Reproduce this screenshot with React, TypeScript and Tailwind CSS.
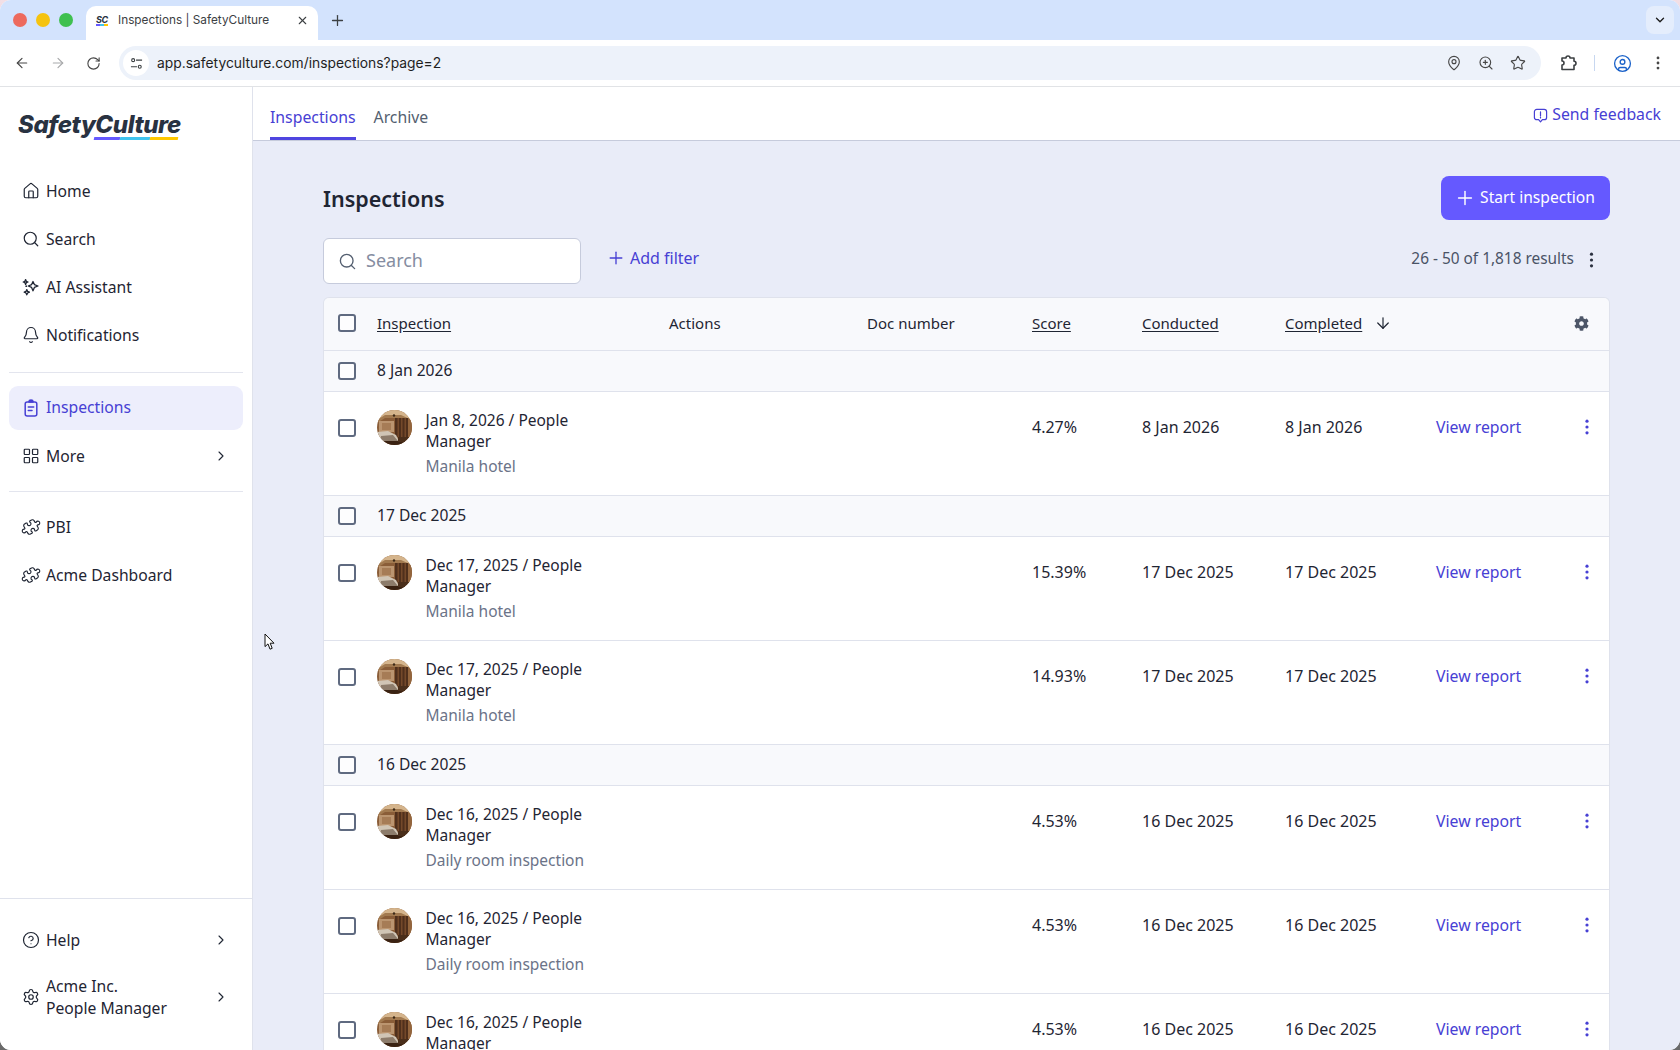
import React from "react";
import {
  ArrowLeft, ArrowRight, RotateCw, MapPin, ZoomIn, Star, CircleUser, X, Plus, ChevronDown, Puzzle,
  House, Search, Bell, LayoutGrid, ChevronRight, CircleHelp, Settings, ArrowDown,
} from "lucide-react";
import { FaCog } from "react-icons/fa";

const Avatar = () => (
  <svg viewBox="0 0 35 35" className="w-[35px] h-[35px] rounded-full shrink-0">
    <rect width="35" height="35" fill="#8a5d38" />
    <rect x="0" y="0" width="35" height="8" fill="#d4b48c" />
    <path d="M0 10 L8 5 H24 L35 10 V14 L24 8 H8 L0 13Z" fill="#a27a50" />
    <rect x="2" y="11" width="15" height="11" fill="#bb9570" />
    <rect x="5" y="13" width="9" height="7" fill="#a67c56" />
    <rect x="18" y="8" width="13" height="19" fill="#50301c" />
    <rect x="20.5" y="8" width="1.5" height="19" fill="#74492a" />
    <rect x="24" y="8" width="1.5" height="19" fill="#74492a" />
    <rect x="27.5" y="8" width="1.5" height="19" fill="#74492a" />
    <rect x="31" y="9" width="4" height="19" fill="#93653d" />
    <path d="M0 22 L11 21 L19 25 L22 31 L0 32Z" fill="#d0c5b5" />
    <path d="M4 26 L16 25 L21 31 L3 32Z" fill="#8d7c6b" />
    <rect x="0" y="31" width="35" height="4" fill="#3a2212" />
    <rect x="21" y="27" width="14" height="5" fill="#4a2e1a" />
    <circle cx="17" cy="5.5" r="1.2" fill="#3d2a18" />
  </svg>
);

const Kebab = ({ className }: { className: string }) => (
  <svg viewBox="0 0 4 16" className={className} fill="currentColor">
    <circle cx="2" cy="2.2" r="1.6" />
    <circle cx="2" cy="8" r="1.6" />
    <circle cx="2" cy="13.8" r="1.6" />
  </svg>
);

const Check = () => <span className="block w-[18px] h-[18px] rounded-[3px] border-2 border-[#5f6a80] bg-white/70" />;

const SparkIcon = () => (
  <svg viewBox="0 0 18 18" className="w-[18px] h-[18px]" fill="none" stroke="#1f2533" strokeWidth="1.3" strokeLinejoin="round">
    <path d="M11 3.5 L12.4 6.6 L16 8 L12.4 9.4 L11 12.8 L9.6 9.4 L6.2 8 L9.6 6.6Z" />
    <path d="M3.6 1.6 L4.3 3.3 L6 4 L4.3 4.7 L3.6 6.4 L2.9 4.7 L1.2 4 L2.9 3.3Z" />
    <path d="M4.8 11.6 L5.6 13.4 L7.4 14.2 L5.6 15 L4.8 16.8 L4 15 L2.2 14.2 L4 13.4Z" />
    <path d="M4.2 8.2 L4.2 8.2" strokeLinecap="round" strokeWidth="1.8" />
  </svg>
);

const ClipIcon = () => (
  <svg viewBox="0 0 18 18" className="w-[18px] h-[18px]" fill="none" stroke="#4740d4" strokeWidth="1.5" strokeLinecap="round" strokeLinejoin="round">
    <rect x="3.2" y="3" width="11.6" height="14" rx="2" />
    <path d="M7 3 V2.2 C7 1.5 7.8 1 9 1 C10.2 1 11 1.5 11 2.2 V3 Z" fill="#4740d4" />
    <path d="M6.3 8 H11.7 M6.3 11.5 H10" />
  </svg>
);

const ExtensionIcon = () => (
  <svg viewBox="0 0 18 18" className="w-[18px] h-[18px] ml-[18px]" fill="none" stroke="#3c4043" strokeWidth="1.6" strokeLinejoin="round">
    <path d="M3 4 H7 A2 2 0 0 1 11 4 H15 V7.2 A2 2 0 0 1 15 11.2 V15.5 H3 V11 A2 2 0 0 0 3 7 Z" />
  </svg>
);

const NavItem = ({ icon, label, chevron }: { icon: React.ReactNode; label: React.ReactNode; chevron?: boolean }) => (
  <div className="flex items-center h-[44px] pl-[13px] pr-[23px] text-[15.7px] text-[#1f2533] leading-[22px]">
    <span className="w-[18px] mr-[6px] flex items-center justify-center shrink-0">{icon}</span>
    <span className="flex-1">{label}</span>
    {chevron && <ChevronRight size={16} strokeWidth={1.6} className="text-[#1f2533]" />}
  </div>
);

const Gap = () => <div className="h-[4px]" />;
const Sep = ({ mt, mb }: { mt: string; mb: string }) => <div className={`mx-[9px] h-px bg-[#e3e5ee] ${mt} ${mb}`} />;

const cols = "grid grid-cols-[53px_292px_198px_165px_110px_143px_150px_1fr]";

type Row = { t: string; sub: string; score: string; d: string };

const DataRow = ({ r }: { r: Row }) => (
  <div className={`${cols} items-start h-[104px] bg-white border-b border-[#dfe2ec] text-[16px] text-[#1f2533]`}>
    <div className="pl-[14px] pt-[27px]"><Check /></div>
    <div className="flex pt-[18px] gap-[13.5px]">
      <Avatar />
      <div className="w-[170px] text-[15.5px]">
        <div className="leading-[21px]">{r.t}</div>
        <div className="mt-[3px] leading-[22px] text-[#6b7388]">{r.sub}</div>
      </div>
    </div>
    <div />
    <div />
    <div className="pt-[23px] leading-[24px]">{r.score}</div>
    <div className="pt-[23px] leading-[24px]">{r.d}</div>
    <div className="pt-[23px] leading-[24px]">{r.d}</div>
    <div className="pt-[23px] leading-[24px] flex text-[15.8px] text-[#4740d4]">
      <span className="w-[150px] pl-[1px]">View report</span>
      <Kebab className="w-[4px] h-[16px] mt-[4px]" />
    </div>
  </div>
);

const GroupRow = ({ d }: { d: string }) => (
  <div className="flex items-center h-[41px] bg-[#f8f9fc] border-b border-[#dfe2ec] text-[15.6px] text-[#1f2533]">
    <div className="w-[53px] pl-[14px]"><Check /></div>
    <div>{d}</div>
  </div>
);

export default function App() {
  const row = (t: string, sub: string, score: string, d: string): Row => ({ t, sub, score, d });
  return (
    <div className="w-[1680px] h-[1050px] overflow-hidden bg-gradient-to-b from-[#f2dfe6] to-[#6a6a6a]">
      <div className="h-full flex flex-col overflow-hidden rounded-[11px] bg-white font-['Noto_Sans',sans-serif]">
        {/* Browser tab strip */}
        <div className="h-[40px] shrink-0 bg-[#d3e3fd] flex items-center font-['Inter',sans-serif]">
          <div className="flex items-center gap-[9px] pl-[13px]">
            <span className="w-[14px] h-[14px] rounded-full bg-[#ed6a5e]" />
            <span className="w-[14px] h-[14px] rounded-full bg-[#f5c30f]" />
            <span className="w-[14px] h-[14px] rounded-full bg-[#3fc04f]" />
          </div>
          <div className="ml-[13px] mt-[6px] w-[232px] h-[34px] bg-white rounded-t-[10px] flex items-center pl-[10px] pr-[9px] pb-[5px]">
            <span className="w-[13px] flex flex-col items-start">
              <span className="italic font-bold text-[9px] leading-[9px] tracking-tighter text-[#293241]">SC</span>
              <span className="w-[12px] h-[2px] flex">
                <span className="w-1/3 bg-[#6559ff]" />
                <span className="w-1/3 bg-[#40c4ee]" />
                <span className="w-1/3 bg-[#ffc800]" />
              </span>
            </span>
            <span className="ml-[9px] flex-1 text-[11.8px] text-[#3c4043] whitespace-nowrap">Inspections | SafetyCulture</span>
            <X size={13} strokeWidth={2} className="text-[#3c4043]" />
          </div>
          <Plus size={17} strokeWidth={1.8} className="ml-[11px] text-[#3c4043]" />
          <div className="flex-1" />
          <div className="w-[28px] h-[28px] mr-[6px] rounded-[8px] bg-[#e4edfc] flex items-center justify-center">
            <ChevronDown size={14} strokeWidth={2.4} className="text-[#1f1f1f]" />
          </div>
        </div>
        {/* Browser toolbar */}
        <div className="h-[47px] shrink-0 bg-white border-b border-[#e1e3e6] rounded-t-[8px] flex items-center text-[#474747] font-['Inter',sans-serif]">
          <ArrowLeft size={16} strokeWidth={1.8} className="ml-[14px]" />
          <ArrowRight size={16} strokeWidth={1.8} className="ml-[20px] text-[#a8a9ab]" />
          <RotateCw size={15} strokeWidth={1.8} className="ml-[20px]" />
          <div className="ml-[18px] w-[1422px] h-[34px] rounded-full bg-[#edf2fa] flex items-center pl-[4px]">
            <span className="w-[26px] h-[26px] rounded-full bg-white flex items-center justify-center">
              <svg viewBox="0 0 14 14" className="w-[13px] h-[13px]" fill="none" stroke="#3c4043" strokeWidth="1.2">
                <circle cx="3.4" cy="3.4" r="1.6" />
                <path d="M6.5 3.4H13M1 10.5H7.5" />
                <circle cx="10.5" cy="10.5" r="1.6" />
              </svg>
            </span>
            <span className="ml-[8px] text-[13.85px] text-[#1f1f1f]">app.safetyculture.com/inspections?page=2</span>
            <div className="flex-1" />
            <MapPin size={16} strokeWidth={1.7} className="mr-[16px]" />
            <ZoomIn size={16} strokeWidth={1.7} className="mr-[16px]" />
            <Star size={16} strokeWidth={1.7} className="mr-[15px]" />
          </div>
          <ExtensionIcon />
          <span className="ml-[17px] w-px h-[16px] bg-[#c7d7f0]" />
          <CircleUser size={19} strokeWidth={1.7} className="ml-[18px] text-[#1b62c9]" />
          <Kebab className="w-[4px] h-[14px] ml-[24px] text-[#474747]" />
        </div>

        <div className="flex-1 flex min-h-0">
          {/* Sidebar */}
          <aside className="w-[253px] shrink-0 bg-white border-r border-[#dfe2ec] flex flex-col">
            <div className="h-[82px] pl-[18px] pt-[23px]">
              <div className="italic font-extrabold text-[24px] leading-[30px] tracking-[-0.4px] text-[#293241] font-['Inter',sans-serif]">SafetyCulture</div>
              <div className="-mt-[3px] ml-[76px] w-[84px] h-[3px] -skew-x-12 flex">
                <span className="w-[31%] bg-[#6559ff]" />
                <span className="w-[36%] bg-[#40c4ee]" />
                <span className="flex-1 bg-[#ffc800]" />
              </div>
            </div>
            <div className="pl-[9px]">
              <NavItem icon={<House size={18} strokeWidth={1.6} />} label="Home" />
              <Gap />
              <NavItem icon={<Search size={18} strokeWidth={1.6} />} label="Search" />
              <Gap />
              <NavItem icon={<SparkIcon />} label="AI Assistant" />
              <Gap />
              <NavItem icon={<Bell size={18} strokeWidth={1.6} />} label="Notifications" />
            </div>
            <Sep mt="mt-[15px]" mb="mb-[13px]" />
            <div className="mx-[9px] h-[44px] rounded-[9px] bg-[#edeefc] flex items-center pl-[13px] text-[15.7px] text-[#4740d4]">
              <span className="w-[18px] mr-[6px]"><ClipIcon /></span>Inspections
            </div>
            <Gap />
            <div className="pl-[9px]">
              <NavItem icon={<LayoutGrid size={18} strokeWidth={1.6} />} label="More" chevron />
            </div>
            <Sep mt="mt-[13px]" mb="mb-[13px]" />
            <div className="pl-[9px]"><NavItem icon={<Puzzle size={18} strokeWidth={1.5} className="rotate-[15deg]" />} label="PBI" /></div>
            <Gap />
            <div className="pl-[9px]"><NavItem icon={<Puzzle size={18} strokeWidth={1.5} className="rotate-[15deg]" />} label="Acme Dashboard" /></div>
            <div className="flex-1" />
            <div className="border-t border-[#dfe2ec] pt-[19px] pb-[31px] pl-[9px]">
              <NavItem icon={<CircleHelp size={18} strokeWidth={1.6} />} label="Help" chevron />
              <div className="h-[13px]" />
              <NavItem icon={<Settings size={18} strokeWidth={1.6} />} label={<>Acme Inc.<br />People Manager</>} chevron />
            </div>
          </aside>

          {/* Main */}
          <main className="relative flex-1 min-w-0 flex flex-col bg-[#e9ecf8]">
            {/* Mouse pointer lying over the page */}
            <svg viewBox="0 0 11 18" className="absolute left-[11px] top-[546px] w-[11px] h-[18px]" fill="#fff" stroke="#111" strokeWidth="1" strokeLinejoin="round">
              <path d="M1 1 V13.6 L4 10.9 L6 16.2 L8.2 15.3 L6.2 10.2 L10 10.2 Z" />
            </svg>
            <div className="h-[54px] shrink-0 bg-white border-b border-[#c6cbdc] flex items-stretch pl-[17px] pr-[19px] text-[15.8px]">
              <div className="flex flex-col">
                <div className="flex-1 flex items-center pt-[12px] text-[#4740d4]">Inspections</div>
                <div className="h-[3px] bg-[#4f45e0]" />
              </div>
              <div className="ml-[18px] flex items-center pt-[9px] text-[#545f70]">Archive</div>
              <div className="flex-1" />
              <div className="flex items-center text-[#4740d4] pt-[2px]">
                <svg viewBox="0 0 16 16" className="w-[15px] h-[15px] mr-[4px] mt-[1px]" fill="none" stroke="currentColor" strokeWidth="1.3" strokeLinejoin="round">
                  <path d="M4 1.5H12A2.5 2.5 0 0 1 14.5 4V10A2.5 2.5 0 0 1 12 12.5H10L8 14.8L6 12.5H4A2.5 2.5 0 0 1 1.5 10V4A2.5 2.5 0 0 1 4 1.5Z" />
                  <path d="M8 4.2V8.2M8 9.8V10.6" strokeLinecap="round" />
                </svg>
                Send feedback
              </div>
            </div>
            <div className="flex-1 min-h-0 overflow-hidden pt-[35px] px-[70px]">
              <div className="flex items-center justify-between h-[44px]">
                <h1 className="text-[21.5px] font-semibold text-[#1f2533] pt-[2px]">Inspections</h1>
                <button className="w-[169px] h-[44px] rounded-[8px] bg-[#6559ff] text-white text-[15.6px] flex items-center justify-center gap-[4px] pr-[2px]">
                  <Plus size={22} strokeWidth={1.6} />Start inspection
                </button>
              </div>
              <div className="mt-[18px] h-[46px] flex items-center">
                <div className="w-[258px] h-[46px] rounded-[6px] border border-[#c6cbdc] bg-white flex items-center pl-[14px]">
                  <Search size={19} strokeWidth={1.7} className="text-[#545f70]" />
                  <span className="ml-[9px] mb-[1px] text-[18px] text-[#858da1]">Search</span>
                </div>
                <Plus size={20} strokeWidth={1.6} className="ml-[25px] mb-[7px] text-[#4740d4]" />
                <span className="ml-[4px] mb-[7px] text-[16px] text-[#4740d4]">Add filter</span>
                <div className="flex-1" />
                <span className="mb-[4px] text-[15.4px] text-[#4a5366]">26 - 50 of 1,818 results</span>
                <Kebab className="w-[5px] h-[16px] ml-[15px] mr-[16px] mb-[3px] text-[#2b3140]" />
              </div>
              <div className="mt-[13px] rounded-t-[6px] border-x border-t border-[#dfe2ec] overflow-hidden">
                <div className={`${cols} items-center h-[53px] bg-[#f8f9fc] border-b border-[#dfe2ec] text-[15px] text-[#1f2533] pb-[2px]`}>
                  <div className="pl-[14px]"><Check /></div>
                  <div><span className="underline underline-offset-2">Inspection</span></div>
                  <div>Actions</div>
                  <div>Doc number</div>
                  <div><span className="underline underline-offset-2">Score</span></div>
                  <div><span className="underline underline-offset-2">Conducted</span></div>
                  <div className="flex items-center"><span className="underline underline-offset-2">Completed</span><ArrowDown size={18} strokeWidth={1.6} className="ml-[12px]" /></div>
                  <div className="flex justify-end pr-[20px]"><FaCog size={15} className="text-[#4d5668]" /></div>
                </div>
                <GroupRow d="8 Jan 2026" />
                <DataRow r={row("Jan 8, 2026 / People Manager", "Manila hotel", "4.27%", "8 Jan 2026")} />
                <GroupRow d="17 Dec 2025" />
                <DataRow r={row("Dec 17, 2025 / People Manager", "Manila hotel", "15.39%", "17 Dec 2025")} />
                <DataRow r={row("Dec 17, 2025 / People Manager", "Manila hotel", "14.93%", "17 Dec 2025")} />
                <GroupRow d="16 Dec 2025" />
                <DataRow r={row("Dec 16, 2025 / People Manager", "Daily room inspection", "4.53%", "16 Dec 2025")} />
                <DataRow r={row("Dec 16, 2025 / People Manager", "Daily room inspection", "4.53%", "16 Dec 2025")} />
                <DataRow r={row("Dec 16, 2025 / People Manager", "Daily room inspection", "4.53%", "16 Dec 2025")} />
              </div>
            </div>
          </main>
        </div>
      </div>
    </div>
  );
}
